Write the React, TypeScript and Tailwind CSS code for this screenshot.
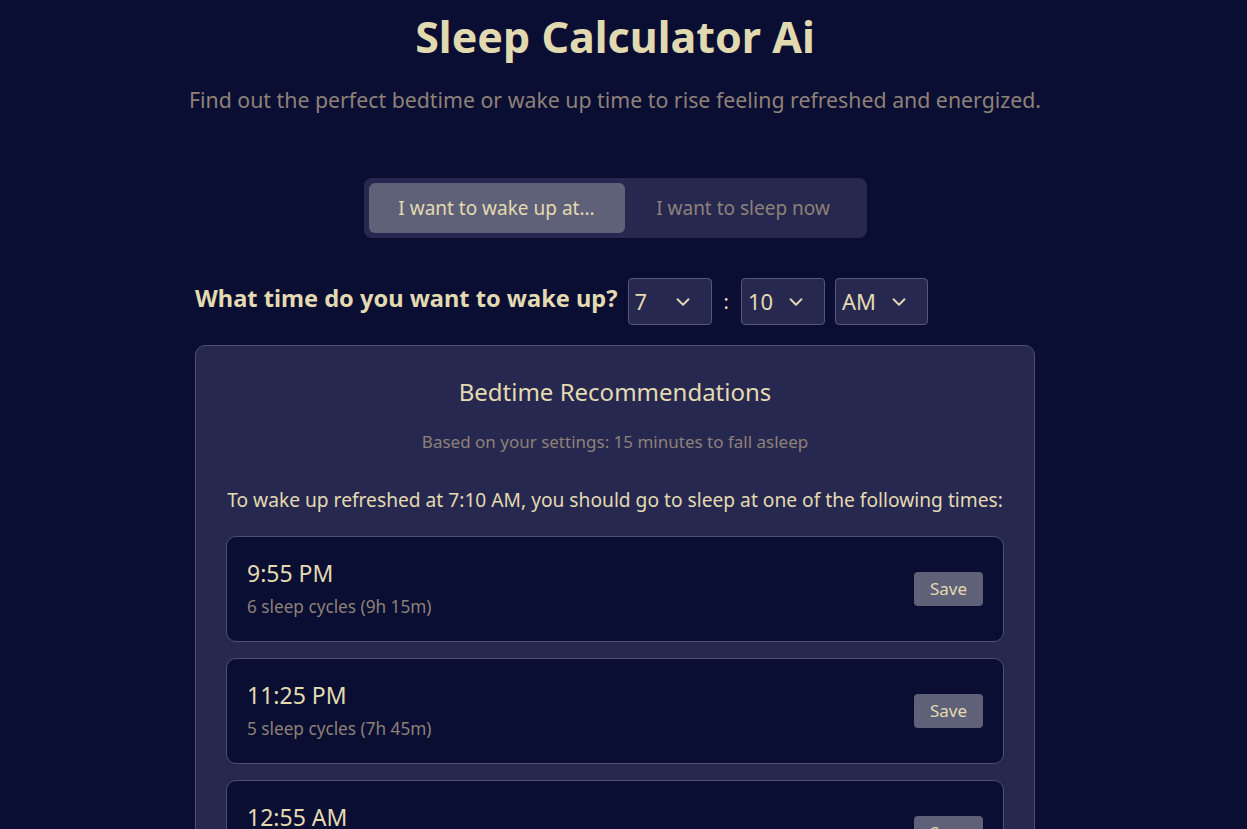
import React from "react";
import { ChevronDown } from "lucide-react";

const items = [
  { time: "9:55 PM", cycles: "6 sleep cycles (9h 15m)" },
  { time: "11:25 PM", cycles: "5 sleep cycles (7h 45m)" },
  { time: "12:55 AM", cycles: "4 sleep cycles (6h 15m)" },
  { time: "2:25 AM", cycles: "3 sleep cycles (4h 45m)" },
];

function Sel({ value, w }: { value: string; w: string }) {
  return (
    <div
      className={`${w} h-[47px] flex items-center justify-between pl-[6px] pr-[17px] rounded-[4px] border border-[#55577a] bg-[#27284f] text-[22px] text-[#e3dab2]`}
    >
      <span>{value}</span>
      <ChevronDown size={22} strokeWidth={2} className="text-[#e3dab2]" />
    </div>
  );
}

export default function App() {
  return (
    <div
      className="min-h-[829px] bg-[#090e32] pr-[17px] text-[#e3dab2]"
      style={{ fontFamily: "'Noto Sans', Lato, sans-serif" }}
    >
      <div className="w-[840px] mx-auto pt-[9px]">
        <h1 className="text-center text-[43px] leading-[56px] font-bold text-[#e1d9b0]">
          Sleep Calculator Ai
        </h1>
        <p className="text-center text-[21.3px] leading-[28px] mt-[21px] text-[#8e8178] -mx-[60px]">
          Find out the perfect bedtime or wake up time to rise feeling refreshed and energized.
        </p>
        <div className="flex justify-center mt-[64px]">
          <div className="flex p-[5px] bg-[#27284f] rounded-[8px] w-[503px]">
            <div className="w-[256px] h-[50px] flex items-center justify-center rounded-[6px] bg-[#5f6178] text-[19px] text-[#e3dab2]">
              I want to wake up at...
            </div>
            <div className="flex-1 h-[50px] flex items-center justify-center text-[19px] text-[#8e8178]">
              I want to sleep now
            </div>
          </div>
        </div>
        <div className="flex items-center mt-[40px] gap-[10px]">
          <span className="text-[23.6px] leading-[32px] font-bold text-[#e3dab2] -mt-[8px]">
            What time do you want to wake up?
          </span>
          <Sel value="7" w="w-[84px]" />
          <span className="text-[20px] px-[2px]">:</span>
          <Sel value="10" w="w-[84px]" />
          <Sel value="AM" w="w-[93px]" />
        </div>
        <div className="mt-[20px] bg-[#27284f] border border-[#4d4f76] rounded-[10px] px-[30px] pt-[30px] pb-[30px]">
          <h2 className="text-center text-[24px] leading-[32px] text-[#e3dab2]">
            Bedtime Recommendations
          </h2>
          <p className="text-center text-[17px] leading-[24px] mt-[22px] text-[#8e8178]">
            Based on your settings: 15 minutes to fall asleep
          </p>
          <p className="text-[19.2px] leading-[28px] mt-[32px] text-center text-[#e3dab2] -mx-[20px]">
            To wake up refreshed at 7:10 AM, you should go to sleep at one of the following times:
          </p>
          <div className="mt-[22px] flex flex-col gap-[16px]">
            {items.map((it) => (
              <div
                key={it.time}
                className="h-[106px] flex items-center justify-between px-[20px] bg-[#090e32] border border-[#4d4f76] rounded-[10px]"
              >
                <div className="flex flex-col">
                  <span className="text-[23px] leading-[30px] text-[#e3dab2] -mt-[1px]">{it.time}</span>
                  <span className="text-[17.2px] leading-[24px] mt-[7px] text-[#8e8178]">{it.cycles}</span>
                </div>
                <button className="w-[69px] h-[34px] rounded-[4px] bg-[#5f6178] text-[17px] text-[#e3dab2]">
                  Save
                </button>
              </div>
            ))}
          </div>
        </div>
      </div>
    </div>
  );
}
